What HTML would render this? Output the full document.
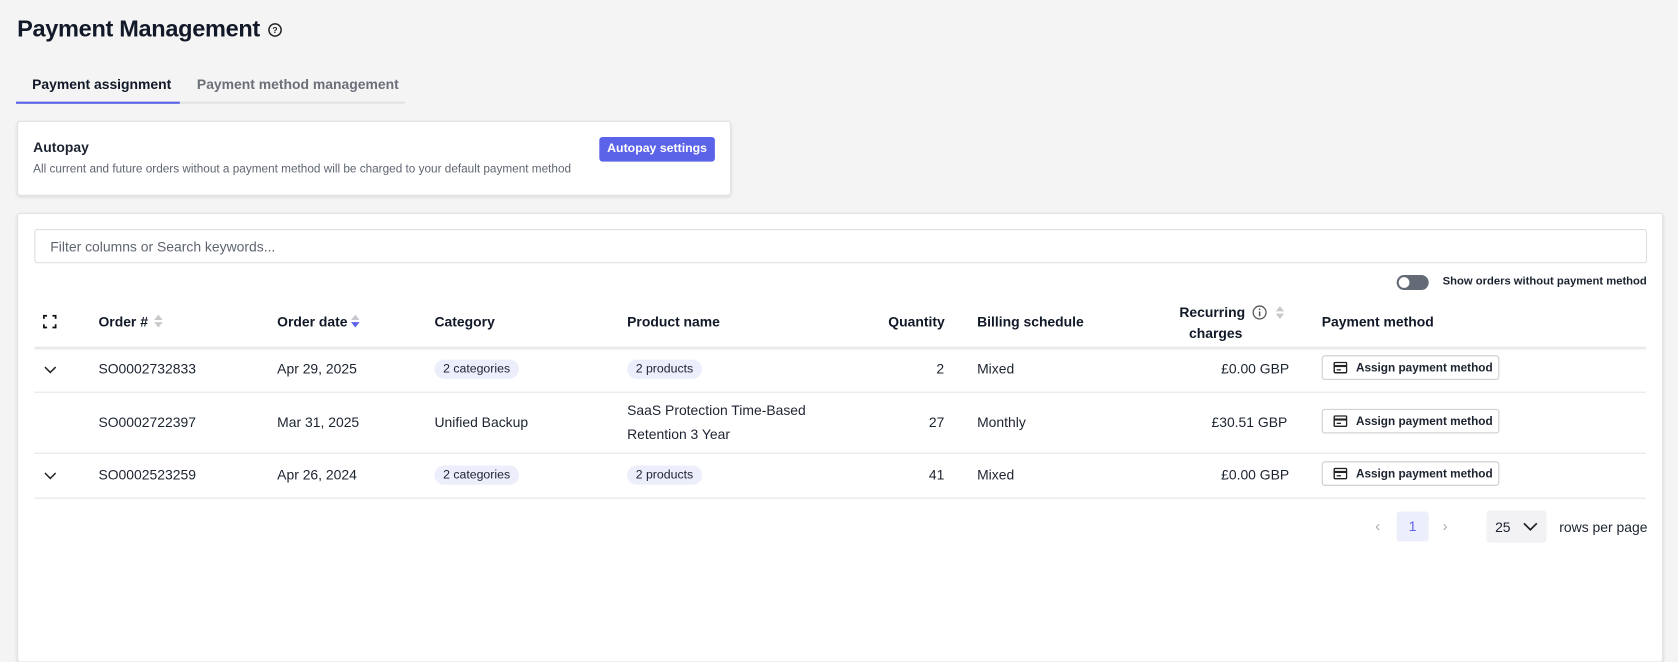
<!DOCTYPE html>
<html><head><meta charset="utf-8"><style>
*{box-sizing:border-box;margin:0;padding:0}
body{width:1678px;height:604px;background:#f4f4f4;font-family:"Liberation Sans",Arial,sans-serif;color:#1c2330;overflow:hidden;font-size:13px}
#w{position:relative;width:1568px;height:565px;transform:scale(1.0702);transform-origin:0 0}
.a{position:absolute;white-space:nowrap}
h1{position:absolute;left:16px;top:14px;font-size:22px;font-weight:bold;letter-spacing:-0.3px;color:#111827}
.card{position:absolute;background:#fff;border:1px solid #e3e3e3;border-radius:3px;box-shadow:0 1px 3px rgba(0,0,0,.12)}
.th{font-weight:bold;font-size:13px;color:#111827}
.pill{position:absolute;background:#eceefb;border-radius:10px;padding:3px 8px;font-size:11.5px;white-space:nowrap}
.btn{position:absolute;left:1235px;width:166px;height:23px;border:1px solid #c9ccd2;border-radius:3px;font-size:11px;font-weight:bold;padding:5px 0 0 31px;white-space:nowrap}
.btn svg{position:absolute;left:10px;top:5px}
.line{position:absolute;left:32px;width:1506px;height:1px;background:#e3e5e8}
.sort{position:absolute;width:8px;height:14px}
</style></head><body><div id="w">
<h1>Payment Management</h1>
<svg class="a" style="left:250px;top:21px" width="14" height="14" viewBox="0 0 14 14"><circle cx="7" cy="7" r="5.7" fill="none" stroke="#222" stroke-width="1.4"/><text x="7" y="10" font-size="8" text-anchor="middle" font-family="Liberation Sans" font-weight="bold" fill="#222">?</text></svg>
<div class="a" style="left:30px;top:71px;font-size:13px;font-weight:bold;color:#111827">Payment assignment</div>
<div class="a" style="left:184px;top:71px;font-size:13px;font-weight:bold;color:#6b6f78">Payment method management</div>
<div class="a" style="left:15px;top:95px;width:363px;height:2px;background:#e2e2e2"></div>
<div class="a" style="left:15px;top:95px;width:153px;height:2px;background:#5b63e8"></div>

<div class="card" style="left:16px;top:113px;width:667px;height:70px">
<div class="a" style="left:14px;top:16px;font-size:13px;font-weight:bold">Autopay</div>
<div class="a" style="left:14px;top:38px;font-size:11px;color:#5f6570">All current and future orders without a payment method will be charged to your default payment method</div>
<div class="a" style="left:543px;top:14px;width:108px;height:23px;background:#5b63e8;border-radius:3px;color:#fff;font-size:11.5px;font-weight:bold;text-align:center;line-height:23px">Autopay settings</div>
</div>

<div class="card" style="left:16px;top:199px;width:1538px;height:420px"></div>
<div class="a" style="left:32px;top:214px;width:1507px;height:32px;border:1px solid #dadde2;border-radius:3px;background:#fff;padding:8px 14px;font-size:13px;color:#5f6570">Filter columns or Search keywords...</div>
<div class="a" style="left:1305px;top:257px;width:30px;height:14px;border-radius:7px;background:#646a76"></div>
<div class="a" style="left:1307px;top:259px;width:10px;height:10px;border-radius:5px;background:#fff"></div>
<div class="a" style="left:1348px;top:257px;font-size:10.5px;font-weight:bold">Show orders without payment method</div>

<svg class="a" style="left:40px;top:294px" width="13" height="13" viewBox="0 0 13 13" fill="none" stroke="#111" stroke-width="1.6"><path d="M1 4V1h3M9 1h3v3M12 9v3H9M4 12H1V9"/></svg>
<div class="a th" style="left:92px;top:293px">Order #</div>
<svg class="sort a" style="left:144px;top:293px" viewBox="0 0 8 14"><path d="M4 1L8 6H0z" fill="#c7c9cd"/><path d="M4 13L8 8H0z" fill="#c7c9cd"/></svg>
<div class="a th" style="left:259px;top:293px">Order date</div>
<svg class="sort a" style="left:328px;top:293px" viewBox="0 0 8 14"><path d="M4 1L8 6H0z" fill="#c7c9cd"/><path d="M4 13L8 8H0z" fill="#5b63e8"/></svg>
<div class="a th" style="left:406px;top:293px">Category</div>
<div class="a th" style="left:586px;top:293px">Product name</div>
<div class="a th" style="left:830px;top:293px">Quantity</div>
<div class="a th" style="left:913px;top:293px">Billing schedule</div>
<div class="a th" style="left:1102px;top:284px">Recurring</div>
<div class="a th" style="left:1111px;top:304px">charges</div>
<svg class="a" style="left:1170px;top:285px" width="14" height="14" viewBox="0 0 14 14"><circle cx="7" cy="7" r="6" fill="none" stroke="#555" stroke-width="1.2"/><rect x="6.3" y="6" width="1.4" height="4.5" fill="#555"/><rect x="6.3" y="3.3" width="1.4" height="1.4" fill="#555"/></svg>
<svg class="sort a" style="left:1192px;top:285px" viewBox="0 0 8 14"><path d="M4 1L8 6H0z" fill="#c7c9cd"/><path d="M4 13L8 8H0z" fill="#c7c9cd"/></svg>
<div class="a th" style="left:1235px;top:293px">Payment method</div>
<div class="line" style="top:324px;height:2px;background:#e8e9ec;box-shadow:0 1px 2px rgba(0,0,0,.06)"></div>

<div class="a" style="left:41px;top:338px"><svg width="12" height="8" viewBox="0 0 12 8"><path d="M1 1l5 5 5-5" fill="none" stroke="#222" stroke-width="1.4"/></svg></div>
<div class="a" style="left:92px;top:337px">SO0002732833</div>
<div class="a" style="left:259px;top:337px">Apr 29, 2025</div>
<div class="pill" style="left:406px;top:336px">2 categories</div>
<div class="pill" style="left:586px;top:336px">2 products</div>
<div class="a" style="left:875px;top:337px">2</div>
<div class="a" style="left:913px;top:337px">Mixed</div>
<div class="a" style="left:1141px;top:337px">£0.00 GBP</div>
<div class="btn" style="top:332px"><svg width="13" height="11" viewBox="0 0 13 11"><rect x="0.7" y="0.7" width="11.6" height="9.6" rx="1" fill="none" stroke="#222" stroke-width="1.3"/><rect x="1" y="3" width="11" height="2" fill="#222"/><rect x="3" y="7" width="4" height="1.2" fill="#222"/></svg>Assign payment method</div>
<div class="line" style="top:366px"></div>

<div class="a" style="left:92px;top:387px">SO0002722397</div>
<div class="a" style="left:259px;top:387px">Mar 31, 2025</div>
<div class="a" style="left:406px;top:387px">Unified Backup</div>
<div class="a" style="left:586px;top:376px">SaaS Protection Time-Based</div>
<div class="a" style="left:586px;top:398px">Retention 3 Year</div>
<div class="a" style="left:868px;top:387px">27</div>
<div class="a" style="left:913px;top:387px">Monthly</div>
<div class="a" style="left:1132px;top:387px">£30.51 GBP</div>
<div class="btn" style="top:382px"><svg width="13" height="11" viewBox="0 0 13 11"><rect x="0.7" y="0.7" width="11.6" height="9.6" rx="1" fill="none" stroke="#222" stroke-width="1.3"/><rect x="1" y="3" width="11" height="2" fill="#222"/><rect x="3" y="7" width="4" height="1.2" fill="#222"/></svg>Assign payment method</div>
<div class="line" style="top:423px"></div>

<div class="a" style="left:41px;top:437px"><svg width="12" height="8" viewBox="0 0 12 8"><path d="M1 1l5 5 5-5" fill="none" stroke="#222" stroke-width="1.4"/></svg></div>
<div class="a" style="left:92px;top:436px">SO0002523259</div>
<div class="a" style="left:259px;top:436px">Apr 26, 2024</div>
<div class="pill" style="left:406px;top:435px">2 categories</div>
<div class="pill" style="left:586px;top:435px">2 products</div>
<div class="a" style="left:868px;top:436px">41</div>
<div class="a" style="left:913px;top:436px">Mixed</div>
<div class="a" style="left:1141px;top:436px">£0.00 GBP</div>
<div class="btn" style="top:431px"><svg width="13" height="11" viewBox="0 0 13 11"><rect x="0.7" y="0.7" width="11.6" height="9.6" rx="1" fill="none" stroke="#222" stroke-width="1.3"/><rect x="1" y="3" width="11" height="2" fill="#222"/><rect x="3" y="7" width="4" height="1.2" fill="#222"/></svg>Assign payment method</div>
<div class="line" style="top:465px"></div>

<div class="a" style="left:1285px;top:483px;color:#aaa;font-size:14px">‹</div>
<div class="a" style="left:1305px;top:478px;width:30px;height:28px;background:#eceefb;border-radius:3px;color:#5b63e8;text-align:center;line-height:28px">1</div>
<div class="a" style="left:1348px;top:483px;color:#aaa;font-size:14px">›</div>
<div class="a" style="left:1389px;top:477px;width:56px;height:30px;background:#f2f2f4;border-radius:3px;padding:8px 0 0 8px">25</div>
<svg class="a" style="left:1423px;top:488px" width="14" height="9" viewBox="0 0 14 9"><path d="M1 1l6 6 6-6" fill="none" stroke="#222" stroke-width="1.6"/></svg>
<div class="a" style="left:1457px;top:485px">rows per page</div>
</div></body></html>
